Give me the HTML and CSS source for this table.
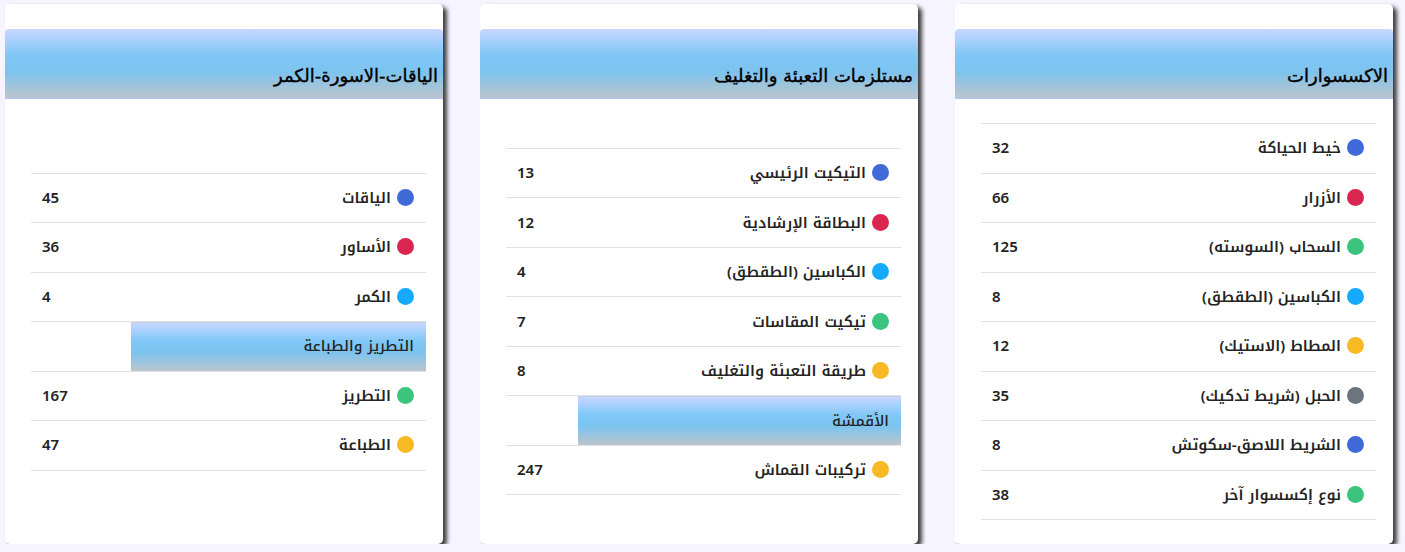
FILE: index.html
```html
<!DOCTYPE html>
<html lang="ar" dir="rtl">
<head>
<meta charset="utf-8">
<title>لوحة</title>
<link rel="stylesheet" href="styles.css">
</head>
<body>
<main class="board">
  <section class="card">
    <h2 class="card-title">الاكسسوارات</h2>
    <div class="card-body">
      <table class="stats stats-a">
        <tr><td class="lbl"><span class="dot primary"></span>خيط الحياكة</td><td class="num">32</td></tr>
        <tr><td class="lbl"><span class="dot danger"></span>الأزرار</td><td class="num">66</td></tr>
        <tr><td class="lbl"><span class="dot success"></span>السحاب (السوسته)</td><td class="num">125</td></tr>
        <tr><td class="lbl"><span class="dot info"></span>الكباسين (الطقطق)</td><td class="num">8</td></tr>
        <tr><td class="lbl"><span class="dot warning"></span>المطاط (الاستيك)</td><td class="num">12</td></tr>
        <tr><td class="lbl"><span class="dot secondary"></span>الحبل (شريط تدكيك)</td><td class="num">35</td></tr>
        <tr><td class="lbl"><span class="dot primary"></span>الشريط اللاصق-سكوتش</td><td class="num">8</td></tr>
        <tr><td class="lbl"><span class="dot success"></span>نوع إكسسوار آخر</td><td class="num">38</td></tr>
      </table>
    </div>
  </section>
  <section class="card">
    <h2 class="card-title">مستلزمات التعبئة والتغليف</h2>
    <div class="card-body">
      <table class="stats stats-b">
        <tr><td class="lbl"><span class="dot primary"></span>التيكيت الرئيسي</td><td class="num">13</td></tr>
        <tr><td class="lbl"><span class="dot danger"></span>البطاقة الإرشادية</td><td class="num">12</td></tr>
        <tr><td class="lbl"><span class="dot info"></span>الكباسين (الطقطق)</td><td class="num">4</td></tr>
        <tr><td class="lbl"><span class="dot success"></span>تيكيت المقاسات</td><td class="num">7</td></tr>
        <tr><td class="lbl"><span class="dot warning"></span>طريقة التعبئة والتغليف</td><td class="num">8</td></tr>
        <tr class="section"><td class="sec">الأقمشة</td><td class="num"></td></tr>
        <tr><td class="lbl"><span class="dot warning"></span>تركيبات القماش</td><td class="num">247</td></tr>
      </table>
    </div>
  </section>
  <section class="card">
    <h2 class="card-title">الياقات-الاسورة-الكمر</h2>
    <div class="card-body">
      <table class="stats stats-c">
        <tr><td class="lbl"><span class="dot primary"></span>الياقات</td><td class="num">45</td></tr>
        <tr><td class="lbl"><span class="dot danger"></span>الأساور</td><td class="num">36</td></tr>
        <tr><td class="lbl"><span class="dot info"></span>الكمر</td><td class="num">4</td></tr>
        <tr class="section"><td class="sec">التطريز والطباعة</td><td class="num"></td></tr>
        <tr><td class="lbl"><span class="dot success"></span>التطريز</td><td class="num">167</td></tr>
        <tr><td class="lbl"><span class="dot warning"></span>الطباعة</td><td class="num">47</td></tr>
      </table>
    </div>
  </section>
</main>
</body>
</html>
```

FILE: styles.css
```css
html, body {
  margin: 0;
  padding: 0;
  background: #f6f4fe;
}
body {
  font-family: "Noto Kufi Arabic", "Noto Sans Arabic", "Noto Sans", "DejaVu Sans", sans-serif;
  color: #222;
}
.board {
  display: flex;
  gap: 37px;
  padding: 4px 12px 0 0;
}
.card {
  width: 438px;
  height: 540px;
  flex: none;
  background: #fff;
  border-radius: 5px;
  box-shadow: 4px 3px 4px rgba(0, 0, 0, 0.75);
  padding-top: 25px;
  box-sizing: border-box;
  display: flex;
  flex-direction: column;
}
.card-title {
  margin: 0;
  height: 70px;
  box-sizing: border-box;
  border-radius: 4px 4px 0 0;
  background: linear-gradient(to bottom, #c9d7ff 0%, #7ec7f7 38%, #7dc3ee 62%, #bdc5cb 100%);
  border-bottom: 1px solid #a9c4ff;
  display: flex;
  align-items: flex-end;
  padding: 0 5px 12px 0;
  font-family: "DejaVu Sans", "Liberation Sans", sans-serif;
  font-size: 18px;
  font-weight: normal;
  -webkit-text-stroke: 0.4px #000;
  color: #000;
}
.card-body {
  flex: 1;
  display: flex;
  align-items: center;
  padding: 0 17px 0 26px;
}
.stats {
  width: 100%;
  border-collapse: collapse;
  border-bottom: 1px solid #dee2e6;
}
.stats td {
  border-top: 1px solid #dee2e6;
  height: 49.5px;
  box-sizing: border-box;
  padding: 0 12px;
  vertical-align: middle;
  font-size: 15px;
  font-weight: 600;
  color: #232323;
}
.stats .num {
  text-align: left;
  padding-left: 11px;
}
.stats-a .num { width: 72px; }
.stats-b .num { width: 72px; }
.stats-c .num { width: 100px; }
.lbl {
  text-align: right;
}
.dot {
  display: inline-block;
  width: 17px;
  height: 17px;
  border-radius: 50%;
  vertical-align: -3px;
  margin-left: 6px;
}
.primary { background: #3f6ad8; }
.danger { background: #d92550; }
.success { background: #3ac47d; }
.info { background: #16aaff; }
.warning { background: #f7b924; }
.secondary { background: #6c757d; }
.section .sec {
  background: linear-gradient(to bottom, #c9d7ff 0%, #7ec7f7 38%, #7dc3ee 62%, #bdc5cb 100%);
  font-weight: 500;
  font-size: 15px;
}
```
